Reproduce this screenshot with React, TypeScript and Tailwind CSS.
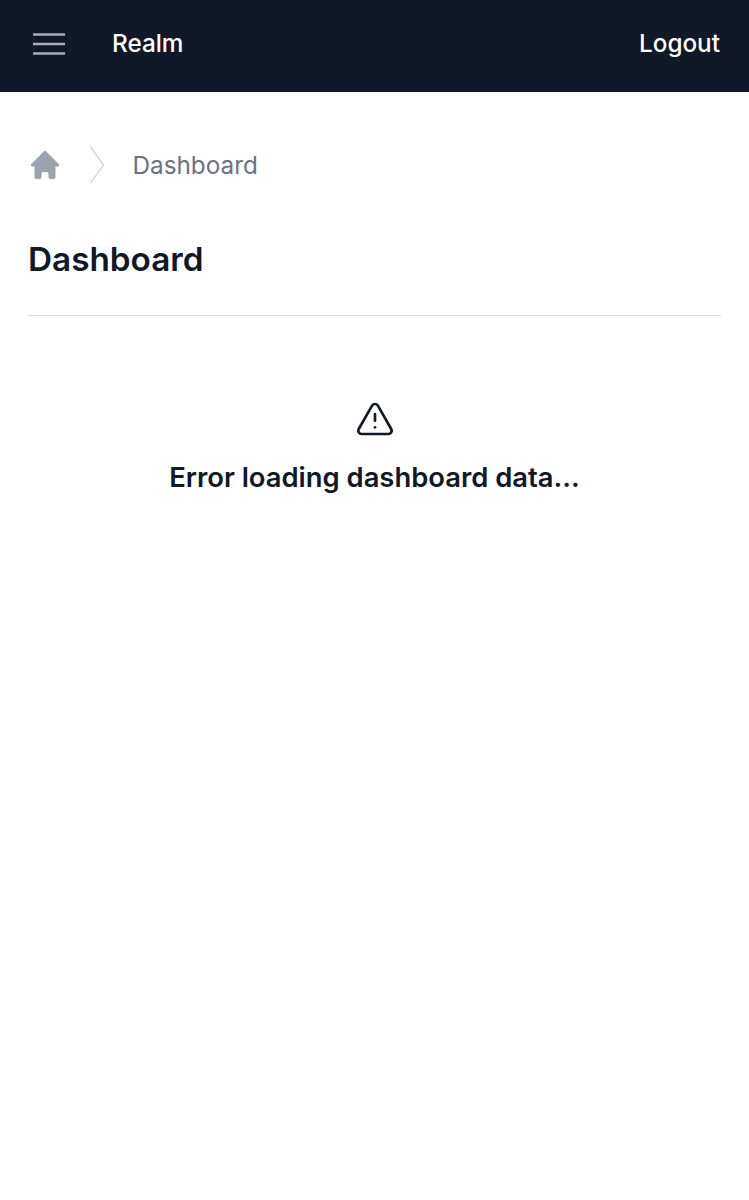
import { TriangleAlert } from "lucide-react";

export default function App() {
  return (
    <div className="min-h-[1200px] bg-white font-['Inter',sans-serif]">
      <nav className="flex h-[92px] items-center justify-between bg-[#111827] pb-[5px] pl-[33px] pr-[29px]">
        <div className="flex items-center gap-[47px]">
          <svg viewBox="0 0 32 22" fill="none" stroke="#a7adba" strokeWidth="2.4" strokeLinecap="butt" className="h-[22px] w-8">
            <path d="M0 1.5h32M0 11h32M0 20.5h32" />
          </svg>
          <span className="text-[24.3px] font-medium text-white">Realm</span>
        </div>
        <span className="text-[24.3px] font-medium text-white">Logout</span>
      </nav>

      <main className="px-7">
        <div className="flex h-[146px] items-center">
          <svg viewBox="2 2 16 16" fill="#9ca3af" className="ml-[3px] h-7 w-7">
            <path d="M10.707 2.293a1 1 0 00-1.414 0l-7 7a1 1 0 001.414 1.414L4 10.414V17a1 1 0 001 1h2a1 1 0 001-1v-2a1 1 0 011-1h2a1 1 0 011 1v2a1 1 0 001 1h2a1 1 0 001-1v-6.586l.293.293a1 1 0 001.414-1.414l-7-7z" />
          </svg>
          <svg viewBox="0 0 16 38" fill="none" stroke="#c4c8cf" strokeWidth="1.1" className="ml-[30px] h-[38px] w-4">
            <path d="M1.5 1l13 18-13 18" />
          </svg>
          <span className="ml-[27.5px] text-[24.3px] text-[#6b7280]">Dashboard</span>
        </div>
        <h1 className="mt-px text-[33.3px] font-semibold leading-10 text-[#111827]">Dashboard</h1>
        <div className="mt-[36px] border-t border-[#dcdee2]" />
        <div className="mt-[83px] flex flex-col items-center">
          <TriangleAlert className="h-10 w-10 text-[#111827]" strokeWidth={1.6} />
          <p className="mt-[20px] text-[27.4px] font-semibold leading-9 text-[#111827]">Error loading dashboard data...</p>
        </div>
      </main>
    </div>
  );
}
